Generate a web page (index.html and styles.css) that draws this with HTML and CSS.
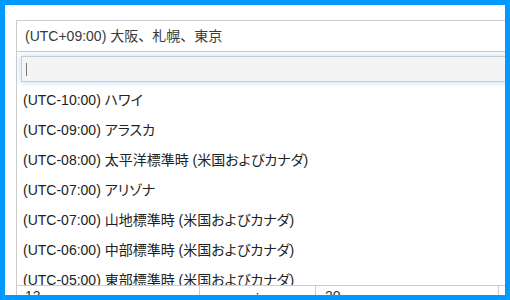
FILE: index.html
```html
<!DOCTYPE html>
<html lang="ja">
<head>
<meta charset="utf-8">
<title>Timezone select</title>
<link rel="stylesheet" href="styles.css">
</head>
<body>
<div class="frame">
  <div class="select">
    <div class="select-head">(UTC+09:00) 大阪、札幌、東京</div>
    <div class="dropdown">
      <div class="search">
        <div class="search-input"><span class="caret"></span></div>
      </div>
      <ul class="options">
        <li>(UTC-10:00) ハワイ</li>
        <li>(UTC-09:00) アラスカ</li>
        <li>(UTC-08:00) 太平洋標準時 (米国およびカナダ)</li>
        <li>(UTC-07:00) アリゾナ</li>
        <li>(UTC-07:00) 山地標準時 (米国およびカナダ)</li>
        <li>(UTC-06:00) 中部標準時 (米国およびカナダ)</li>
        <li>(UTC-05:00) 東部標準時 (米国およびカナダ)</li>
        <li>(UTC-04:00) 大西洋標準時 (カナダ)</li>
      </ul>
    </div>
  </div>
  <div class="cal-row">
    <div class="cal-cell">13</div>
    <div class="cal-cell center">:</div>
    <div class="cal-cell">20</div>
    <div class="cal-cell"></div>
  </div>
</div>
</body>
</html>
```
FILE: styles.css
```css
html, body {
  margin: 0;
  padding: 0;
  background: #fff;
}
.frame {
  width: 510px;
  height: 300px;
  box-sizing: border-box;
  border: 5px solid #0099ff;
  background: #fff;
  overflow: hidden;
  padding: 15px 0 0 11px;
  font-family: "Liberation Sans", "Noto Sans CJK JP", sans-serif;
  font-size: 14px;
  color: #333;
}
.select {
  width: 540px;
}
.select-head {
  height: 30px;
  line-height: 30px;
  padding-left: 8px;
  border: 1px solid #ccc;
  color: #3a3a3a;
  white-space: nowrap;
}
.dropdown {
  border-left: 1px solid #ccc;
  border-bottom: 1px solid #ccc;
}
.search {
  padding: 4px 0 3px 4px;
}
.search-input {
  height: 24px;
  border: 1px solid #ccc;
  background: #f4f4f4;
  box-shadow: 0 0 7px rgba(0, 130, 255, 0.28);
  display: flex;
  align-items: center;
  padding-left: 4px;
}
.caret {
  width: 1px;
  height: 13px;
  background: #777;
}
.options {
  list-style: none;
  margin: 0;
  padding: 0;
  height: 200px;
  overflow: hidden;
  font-feature-settings: "palt";
}
.options li {
  height: 30px;
  line-height: 30px;
  padding-left: 6px;
  color: #222;
  white-space: nowrap;
}
.cal-row {
  display: flex;
  width: 540px;
  border-left: 1px solid #ccc;
}
.cal-cell {
  box-sizing: border-box;
  border-right: 1px solid #ccc;
  height: 20px;
  padding: 2px 0 0 8px;
  line-height: 16px;
  color: #333;
  flex: 0 0 auto;
}
.cal-cell:nth-child(1) { width: 183px; }
.cal-cell:nth-child(2) { width: 116px; padding-left: 0; text-align: center; }
.cal-cell:nth-child(3) { width: 183px; padding-left: 9px; }
.cal-cell:nth-child(4) { width: 60px; }
```
